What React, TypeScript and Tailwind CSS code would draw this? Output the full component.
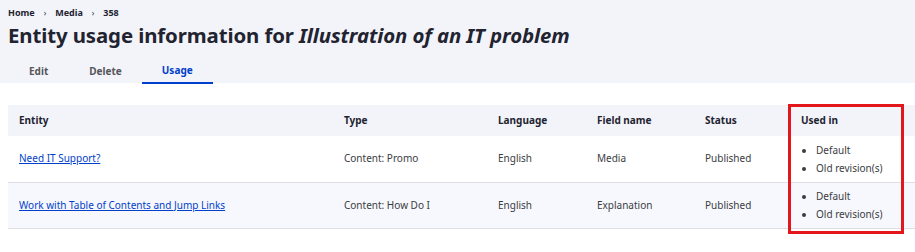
import React from "react";

const rows = [
  { entity: "Need IT Support?", type: "Content: Promo", lang: "English", field: "Media", status: "Published", bg: "bg-white" },
  { entity: "Work with Table of Contents and Jump Links", type: "Content: How Do I", lang: "English", field: "Explanation", status: "Published", bg: "bg-[#f7f8fd]" },
];

export default function App() {
  return (
    <div className="w-[915px] h-[252px] bg-white overflow-hidden text-[#222330]" style={{ fontFamily: '"Noto Sans", "Open Sans", sans-serif' }}>
      <div className="bg-[#f3f4f9] h-[83px] px-2 pt-[7px]">
        <div className="flex items-center h-[12px] text-[9px] font-bold text-[#222330]">
          <span>Home</span>
          <span className="mx-[9px] text-[8px] font-normal">›</span>
          <span>Media</span>
          <span className="mx-[9px] text-[8px] font-normal">›</span>
          <span>358</span>
        </div>
        <h1 className="text-[20.4px] font-bold leading-[30px] mt-[1px] tracking-[-0.1px]">
          Entity usage information for <em>Illustration of an IT problem</em>
        </h1>
        <div className="flex mt-[9px] text-[10px] font-bold">
          <div className="px-[21px] h-[25px] flex items-center text-[#55565b]">Edit</div>
          <div className="px-[20px] h-[25px] flex items-center text-[#55565b]">Delete</div>
          <div className="px-[20px] h-[25px] flex items-center text-[#003ecc] border-b-2 border-[#003ecc]">Usage</div>
        </div>
      </div>
      <div className="relative ml-2 mt-[22px]">
        <table className="w-[907px] border-collapse text-[10px] table-fixed">
          <colgroup>
            <col className="w-[325px]" />
            <col className="w-[154px]" />
            <col className="w-[99px]" />
            <col className="w-[108px]" />
            <col className="w-[96px]" />
            <col className="w-[125px]" />
          </colgroup>
          <thead>
            <tr className="bg-[#f3f4f9] h-[31px] text-left font-bold">
              <th className="pl-[11px]">Entity</th>
              <th className="pl-[11px]">Type</th>
              <th className="pl-[11px]">Language</th>
              <th className="pl-[11px]">Field name</th>
              <th className="pl-[11px]">Status</th>
              <th className="pl-[11px]">Used in</th>
            </tr>
          </thead>
          <tbody className="text-[#3b3c42]">
            {rows.map((r) => (
              <tr key={r.entity} className={`${r.bg} h-[46px] border-b border-[#dedfe4]`}>
                <td className="pl-[11px]">
                  <a className="text-[#003ecc] underline" href="#">{r.entity}</a>
                </td>
                <td className="pl-[11px]">{r.type}</td>
                <td className="pl-[11px]">{r.lang}</td>
                <td className="pl-[11px]">{r.field}</td>
                <td className="pl-[11px]">{r.status}</td>
                <td className="pl-[11px]">
                  <ul className="list-disc pl-[15px] leading-[18px]">
                    <li>Default</li>
                    <li>Old revision(s)</li>
                  </ul>
                </td>
              </tr>
            ))}
          </tbody>
        </table>
        <div className="absolute left-[780px] top-[-1px] w-[116px] h-[130px] border-[3px] border-[#e3161b]" />
      </div>
    </div>
  );
}
